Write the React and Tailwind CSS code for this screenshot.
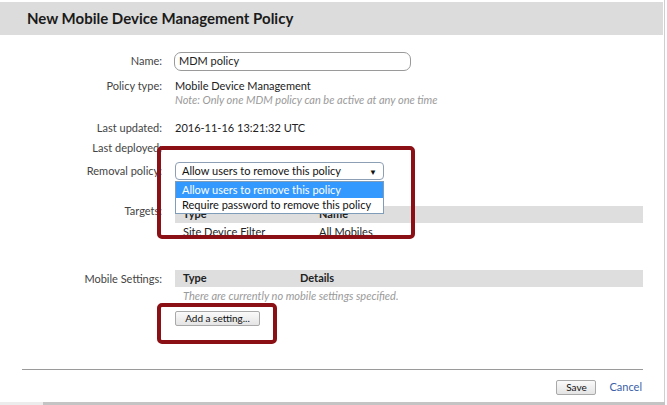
export default function App() {
  const font = { fontFamily: 'Lato, "Open Sans", "Liberation Sans", sans-serif' };
  return (
    <div className="relative w-[667px] h-[405px] overflow-hidden bg-white text-[11px] text-[#222]" style={font}>
      <div className="w-[665px] h-[402px] border-r border-[#cfcfcf] flex flex-col">
        <div className="mt-[2px] h-[33px] w-[663px] bg-[#dcdcdc] flex items-center pl-[27px] text-[15px] font-bold text-[#1a1a1a]">
          New Mobile Device Management Policy
        </div>

        {/* Name */}
        <div className="mt-[17px] flex h-[19px] items-center">
          <div className="w-[162px] text-right text-[#444]">Name:</div>
          <div className="ml-[12px] w-[237px] h-[19px] rounded-[7px] border border-[#9a9a9a] flex items-center pl-[4px]">MDM policy</div>
        </div>

        {/* Policy type */}
        <div className="mt-[8px] flex">
          <div className="w-[162px] text-right text-[#444] leading-[14px]">Policy type:</div>
          <div className="ml-[13px] flex flex-col leading-[14px]">
            <div>Mobile Device Management</div>
            <div className="italic text-[#9a9a9a]">Note: Only one MDM policy can be active at any one time</div>
          </div>
        </div>

        {/* Last updated */}
        <div className="mt-[14px] flex leading-[14px]">
          <div className="w-[162px] text-right text-[#444]">Last updated:</div>
          <div className="ml-[13px]">2016-11-16 13:21:32 UTC</div>
        </div>

        {/* Last deployed */}
        <div className="mt-[6px] flex leading-[14px] h-[14px]">
          <div className="w-[162px] text-right text-[#444]">Last deployed:</div>
        </div>

        {/* Removal policy */}
        <div className="mt-[7px] flex h-[18px] items-center">
          <div className="w-[162px] text-right text-[#444] whitespace-nowrap">Removal policy:</div>
          <div className="ml-[13px] relative w-[209px] h-[18px] rounded-[4px] border border-[#8d9fb5] flex items-center pl-[6px] text-[#111] whitespace-nowrap">
            Allow users to remove this policy
            <span className="absolute right-[6px] top-[3px] text-[8px]">▼</span>
          </div>
        </div>

        {/* Targets */}
        <div className="mt-[26px] flex">
          <div className="w-[162px] text-right text-[#444] leading-[14px] -mt-[2px]">Targets:</div>
          <div className="ml-[13px] w-[468px]">
            <div className="h-[17px] bg-[#dedede] flex items-center font-bold">
              <div className="pl-[8px] w-[144px]">Type</div>
              <div>Name</div>
            </div>
            <div className="h-[18px] flex items-center">
              <div className="pl-[8px] w-[144px]">Site Device Filter</div>
              <div>All Mobiles</div>
            </div>
          </div>
        </div>

        {/* Mobile Settings */}
        <div className="mt-[29px] flex">
          <div className="w-[162px] text-right text-[#444] leading-[14px] pt-[2px]">Mobile Settings:</div>
          <div className="ml-[13px] w-[468px]">
            <div className="h-[17px] bg-[#dedede] flex items-center font-bold">
              <div className="pl-[8px] w-[125px]">Type</div>
              <div>Details</div>
            </div>
            <div className="h-[18px] flex items-center pl-[8px] italic text-[#9a9a9a]">There are currently no mobile settings specified.</div>
            <div className="mt-[6px] w-[85px] h-[15px] border border-[#a9a9a9] rounded-[2px] bg-gradient-to-b from-[#fafafa] to-[#e4e4e4] flex items-center justify-center text-[10px] text-[#111] whitespace-nowrap">
              Add a setting...
            </div>
          </div>
        </div>

        {/* Divider */}
        <div className="mt-[43px] ml-[22px] w-[621px] h-px bg-[#9a9a9a]" />

        {/* Footer */}
        <div className="mt-[9px] flex items-center justify-end pr-[22px] gap-[13px]">
          <div className="w-[40px] h-[15px] border border-[#a9a9a9] rounded-[2px] bg-gradient-to-b from-[#fafafa] to-[#e4e4e4] flex items-center justify-center text-[10px] text-[#111]">Save</div>
          <div className="text-[#3b5fa8] text-[11px]">Cancel</div>
        </div>
      </div>

      {/* bottom bar */}
      <div className="absolute left-0 top-[402px] w-[43px] h-[3px] bg-[#ececec]" />
      <div className="absolute left-[43px] top-[402px] w-[622px] h-[3px] bg-[#c4c4c4]" />

      {/* Dropdown list overlay */}
      <div className="absolute left-[175px] top-[181px] w-[209px] border border-[#7f9db9] bg-white text-[11px] whitespace-nowrap">
        <div className="h-[16px] bg-[#3399ff] text-white flex items-center pl-[6px]">Allow users to remove this policy</div>
        <div className="h-[15px] flex items-center pl-[6px] text-[#111]">Require password to remove this policy</div>
      </div>

      {/* Red highlight boxes */}
      <div className="absolute left-[157px] top-[146px] w-[258px] h-[93px] border-[4px] border-[#8b1015] rounded-[5px]" />
      <div className="absolute left-[157px] top-[303px] w-[120px] h-[41px] border-[4px] border-[#8b1015] rounded-[5px]" />
    </div>
  );
}
